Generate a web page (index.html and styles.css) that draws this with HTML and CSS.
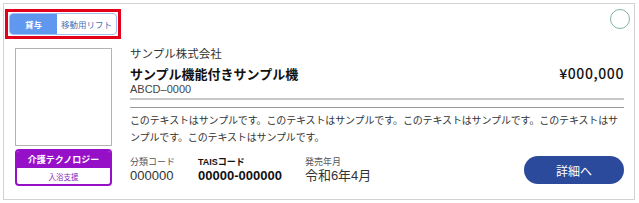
FILE: index.html
```html
<!DOCTYPE html>
<html lang="ja">
<head>
<meta charset="utf-8">
<title>商品カード</title>
<link rel="stylesheet" href="styles.css">
</head>
<body>
<div class="card">
  <div class="head">
    <div class="mark">
      <div class="tabs">
        <span class="tab tab-on">貸与</span>
        <span class="tab">移動用リフト</span>
      </div>
    </div>
    <span class="fav"></span>
  </div>
  <div class="body">
    <div class="side">
      <div class="photo"></div>
      <div class="tag">
        <div class="tag-top">介護テクノロジー</div>
        <div class="tag-sub">入浴支援</div>
      </div>
    </div>
    <div class="main">
      <div class="top">
        <div class="maker">サンプル株式会社</div>
        <div class="title-row">
          <h2 class="name">サンプル機能付きサンプル機</h2>
          <span class="price">¥000,000</span>
        </div>
        <div class="code">ABCD–0000</div>
      </div>
      <div class="rule"></div>
      <p class="desc">このテキストはサンプルです。このテキストはサンプルです。このテキストはサンプルです。このテキストはサンプルです。このテキストはサンプルです。</p>
      <div class="foot">
        <div class="specs">
          <div class="spec">
            <div class="spec-label">分類コード</div>
            <div class="spec-value">000000</div>
          </div>
          <div class="spec spec-strong">
            <div class="spec-label">TAISコード</div>
            <div class="spec-value">00000-000000</div>
          </div>
          <div class="spec">
            <div class="spec-label">発売年月</div>
            <div class="spec-value">令和6年4月</div>
          </div>
        </div>
        <a class="btn" href="#">詳細へ</a>
      </div>
    </div>
  </div>
</div>
</body>
</html>
```

FILE: styles.css
```css
* { box-sizing: border-box; }

html, body {
  margin: 0;
  background: #fff;
}

body {
  padding: 3px 0 0 3px;
  font-family: "Liberation Sans", "Noto Sans CJK JP", sans-serif;
  color: #333;
}

.card {
  width: 632px;
  height: 197px;
  border: 1px solid #d2d2d2;
  background: #fff;
}

.head {
  display: flex;
  justify-content: space-between;
  align-items: flex-start;
  height: 35px;
  padding: 5px 4px 0 1px;
}

.mark {
  border: 3px solid #e3001b;
  padding: 1px;
}

.tabs {
  display: flex;
  width: 108px;
  height: 22px;
  border: 1px solid #a3bff0;
  border-radius: 4px;
  overflow: hidden;
  background: #fff;
}

.tab {
  flex: 1;
  display: flex;
  align-items: center;
  justify-content: center;
  font-size: 8.5px;
  color: #4a70b6;
}

.tab-on {
  flex: 0 0 47px;
  background: #6198ef;
  color: #fff;
  font-weight: bold;
}

.fav {
  width: 20px;
  height: 20px;
  border: 1.5px solid #80b4a4;
  border-radius: 50%;
}

.body {
  display: flex;
  gap: 18px;
  padding: 9px 10px 0 11px;
}

.side {
  flex: 0 0 97px;
  display: flex;
  flex-direction: column;
  gap: 3px;
}

.photo {
  height: 98px;
  border: 1px solid #b3b3b3;
}

.tag {
  height: 37px;
  border: 2px solid #9610c8;
  border-radius: 4px;
  overflow: hidden;
  display: flex;
  flex-direction: column;
}

.tag-top {
  height: 17px;
  background: #9610c8;
  color: #fff;
  font-weight: bold;
  font-size: 9px;
  display: flex;
  align-items: center;
  justify-content: center;
}

.tag-sub {
  flex: 1;
  color: #8a2bb8;
  font-size: 7.5px;
  display: flex;
  align-items: center;
  justify-content: center;
}

.main {
  flex: 1;
  min-width: 0;
}

.top {
  height: 52px;
  border-bottom: 2px solid #c8c8c8;
}

.maker {
  font-size: 11.5px;
  line-height: 13px;
  color: #333;
}

.title-row {
  display: flex;
  justify-content: space-between;
  align-items: baseline;
  margin-top: 3px;
  height: 18px;
}

.name {
  margin: 0;
  font-size: 13px;
  line-height: 18px;
  font-weight: bold;
  color: #111;
}

.price {
  font-family: "Noto Sans CJK JP", "Liberation Sans", sans-serif;
  font-size: 14px;
  line-height: 18px;
  font-weight: 500;
  letter-spacing: 0.6px;
  color: #111;
}

.code {
  font-size: 11px;
  line-height: 14px;
  color: #444;
}

.rule {
  margin-top: 7px;
  border-top: 1px solid #9a9a9a;
}

.desc {
  margin: 4px 0 0;
  font-size: 10px;
  letter-spacing: -0.14px;
  line-height: 17px;
  color: #333;
}

.foot {
  display: flex;
  justify-content: space-between;
  align-items: flex-end;
  margin-top: 10px;
}

.specs {
  display: flex;
  gap: 23px;
}

.spec-label {
  font-size: 9px;
  line-height: 12px;
  color: #555;
}

.spec-value {
  font-size: 13px;
  line-height: 16px;
  color: #333;
}

.spec-strong .spec-label,
.spec-strong .spec-value {
  font-weight: bold;
  color: #111;
}

.btn {
  width: 100px;
  height: 28px;
  border-radius: 14px;
  background: #2b4a9b;
  color: #fff;
  font-family: "Noto Sans CJK JP", sans-serif;
  font-size: 12px;
  font-weight: 400;
  text-decoration: none;
  display: flex;
  align-items: center;
  justify-content: center;
}
```
